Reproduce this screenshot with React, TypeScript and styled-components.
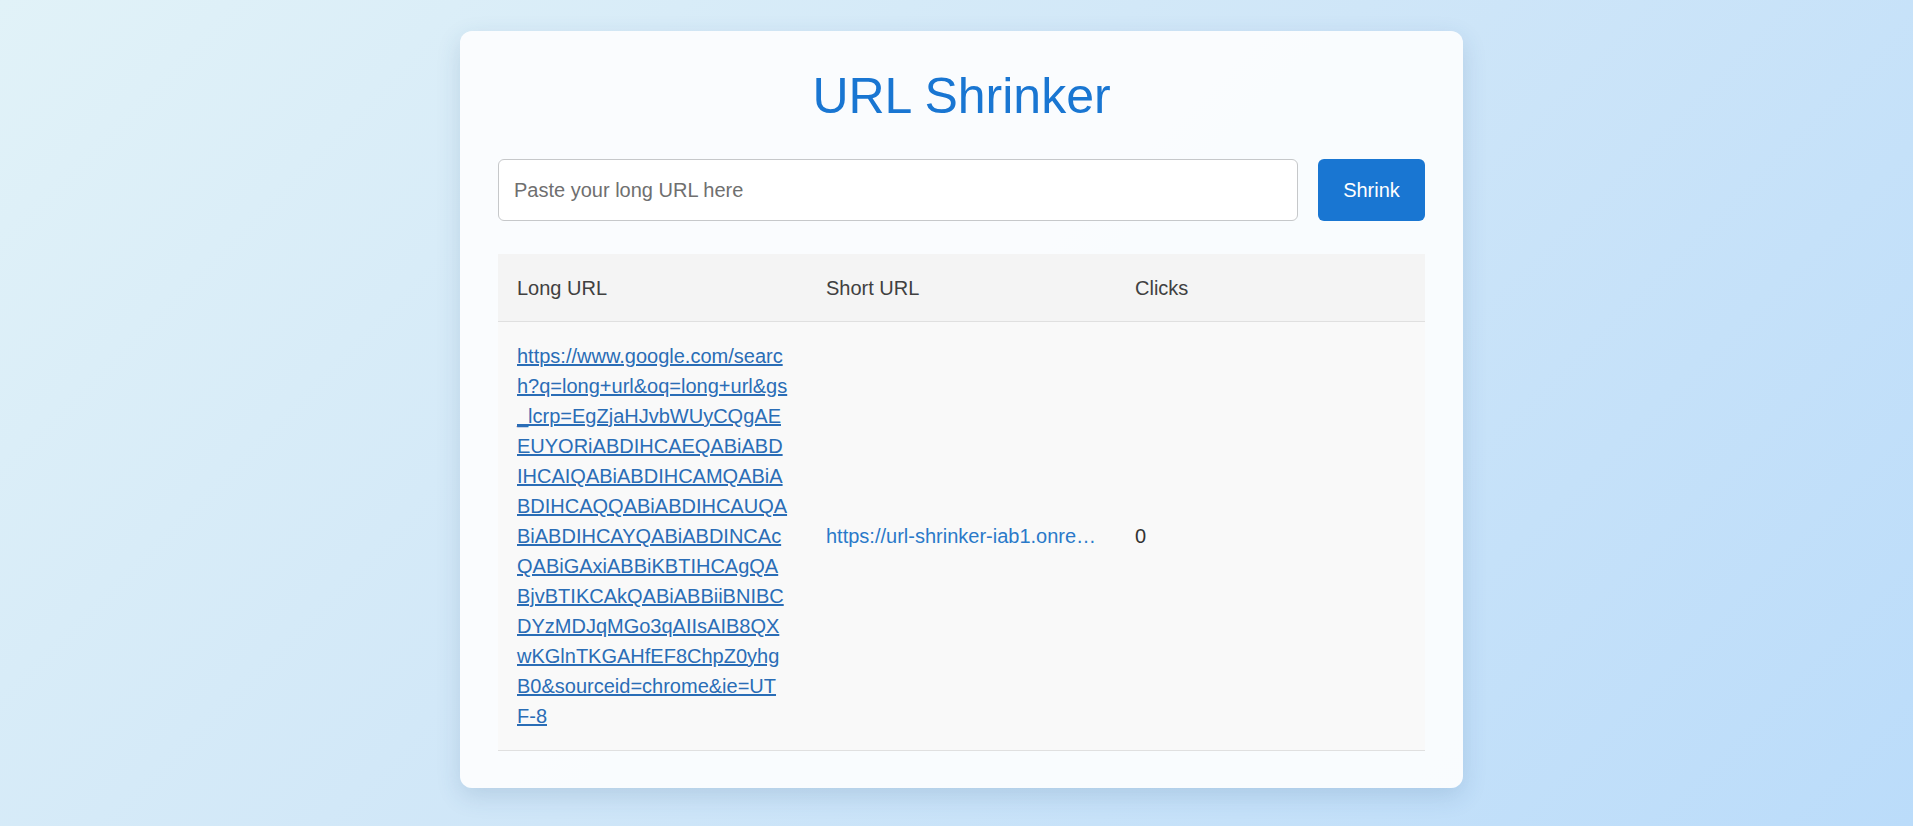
import React from "react";
import styled, { createGlobalStyle } from "styled-components";

const GlobalStyle = createGlobalStyle`
  html, body {
    margin: 0;
    padding: 0;
  }
  body {
    min-height: 100vh;
    font-family: "Liberation Sans", Arial, sans-serif;
    background: linear-gradient(135deg, #e1f2f8 0%, #cfe6f8 50%, #bbdcfa 100%);
    background-attachment: fixed;
  }
  * { box-sizing: border-box; }
`;

const Page = styled.div`
  min-height: 100vh;
  display: flex;
  justify-content: center;
  align-items: flex-start;
  padding: 31px 0 30px 10px;
`;

const Card = styled.main`
  width: 1003px;
  background: rgba(252, 253, 254, 0.94);
  border-radius: 12px;
  padding: 38px 38px 37px;
  box-shadow: 0 8px 24px rgba(40, 80, 130, 0.16);
`;

const Title = styled.h1`
  margin: 0 0 35px;
  font-size: 50px;
  line-height: 55px;
  font-weight: 400;
  color: #1976d2;
  text-align: center;
`;

const Form = styled.form`
  display: flex;
  gap: 20px;
  height: 62px;
  margin-bottom: 33px;
`;

const UrlInput = styled.input`
  flex: 1;
  height: 100%;
  border: 1px solid #c6c8ca;
  border-radius: 6px;
  background: #ffffff;
  padding: 0 15px;
  font-family: inherit;
  font-size: 20px;
  color: #333;
  outline: none;
  &::placeholder {
    color: #6f6f6f;
  }
`;

const Button = styled.button`
  width: 107px;
  height: 100%;
  border: none;
  border-radius: 6px;
  background: #1976d2;
  color: #ffffff;
  font-family: inherit;
  font-size: 20px;
  cursor: pointer;
`;

const Table = styled.table`
  width: 100%;
  border-collapse: collapse;
  table-layout: fixed;
`;

const Th = styled.th`
  background: #f4f4f4;
  color: #404040;
  font-weight: 400;
  font-size: 20px;
  line-height: 30px;
  text-align: left;
  padding: 19px 19px 18px;
  border-bottom: 1px solid #e0e0e0;
`;

const Td = styled.td`
  background: #f9f9f9;
  color: #333;
  font-size: 20px;
  line-height: 30px;
  padding: 19px;
  vertical-align: middle;
  border-bottom: 1px solid #e0e0e0;
  word-break: break-all;
`;

const LongLink = styled.a`
  color: #2a6db6;
  text-decoration: underline;
`;

const ShortLink = styled.a`
  color: #2a79c9;
  text-decoration: none;
  white-space: nowrap;
  word-break: normal;
`;

const longUrl =
  "https://www.google.com/search?q=long+url&oq=long+url&gs_lcrp=EgZjaHJvbWUyCQgAEEUYORiABDIHCAEQABiABDIHCAIQABiABDIHCAMQABiABDIHCAQQABiABDIHCAUQABiABDIHCAYQABiABDINCAcQABiGAxiABBiKBTIHCAgQABjvBTIKCAkQABiABBiiBNIBCDYzMDJqMGo3qAIIsAIB8QXwKGlnTKGAHfEF8ChpZ0yhgB0&sourceid=chrome&ie=UTF-8";
const shortUrlDisplay = "https://url-shrinker-iab1.onre\u2026";

export default function App() {
  return (
    <>
      <GlobalStyle />
      <Page>
        <Card>
          <Title>URL Shrinker</Title>
          <Form onSubmit={(e) => e.preventDefault()}>
            <UrlInput type="text" placeholder="Paste your long URL here" />
            <Button type="submit">Shrink</Button>
          </Form>
          <Table>
            <thead>
              <tr>
                <Th>Long URL</Th>
                <Th>Short URL</Th>
                <Th>Clicks</Th>
              </tr>
            </thead>
            <tbody>
              <tr>
                <Td>
                  <LongLink href="#">{longUrl}</LongLink>
                </Td>
                <Td>
                  <ShortLink href="#">{shortUrlDisplay}</ShortLink>
                </Td>
                <Td>0</Td>
              </tr>
            </tbody>
          </Table>
        </Card>
      </Page>
    </>
  );
}
